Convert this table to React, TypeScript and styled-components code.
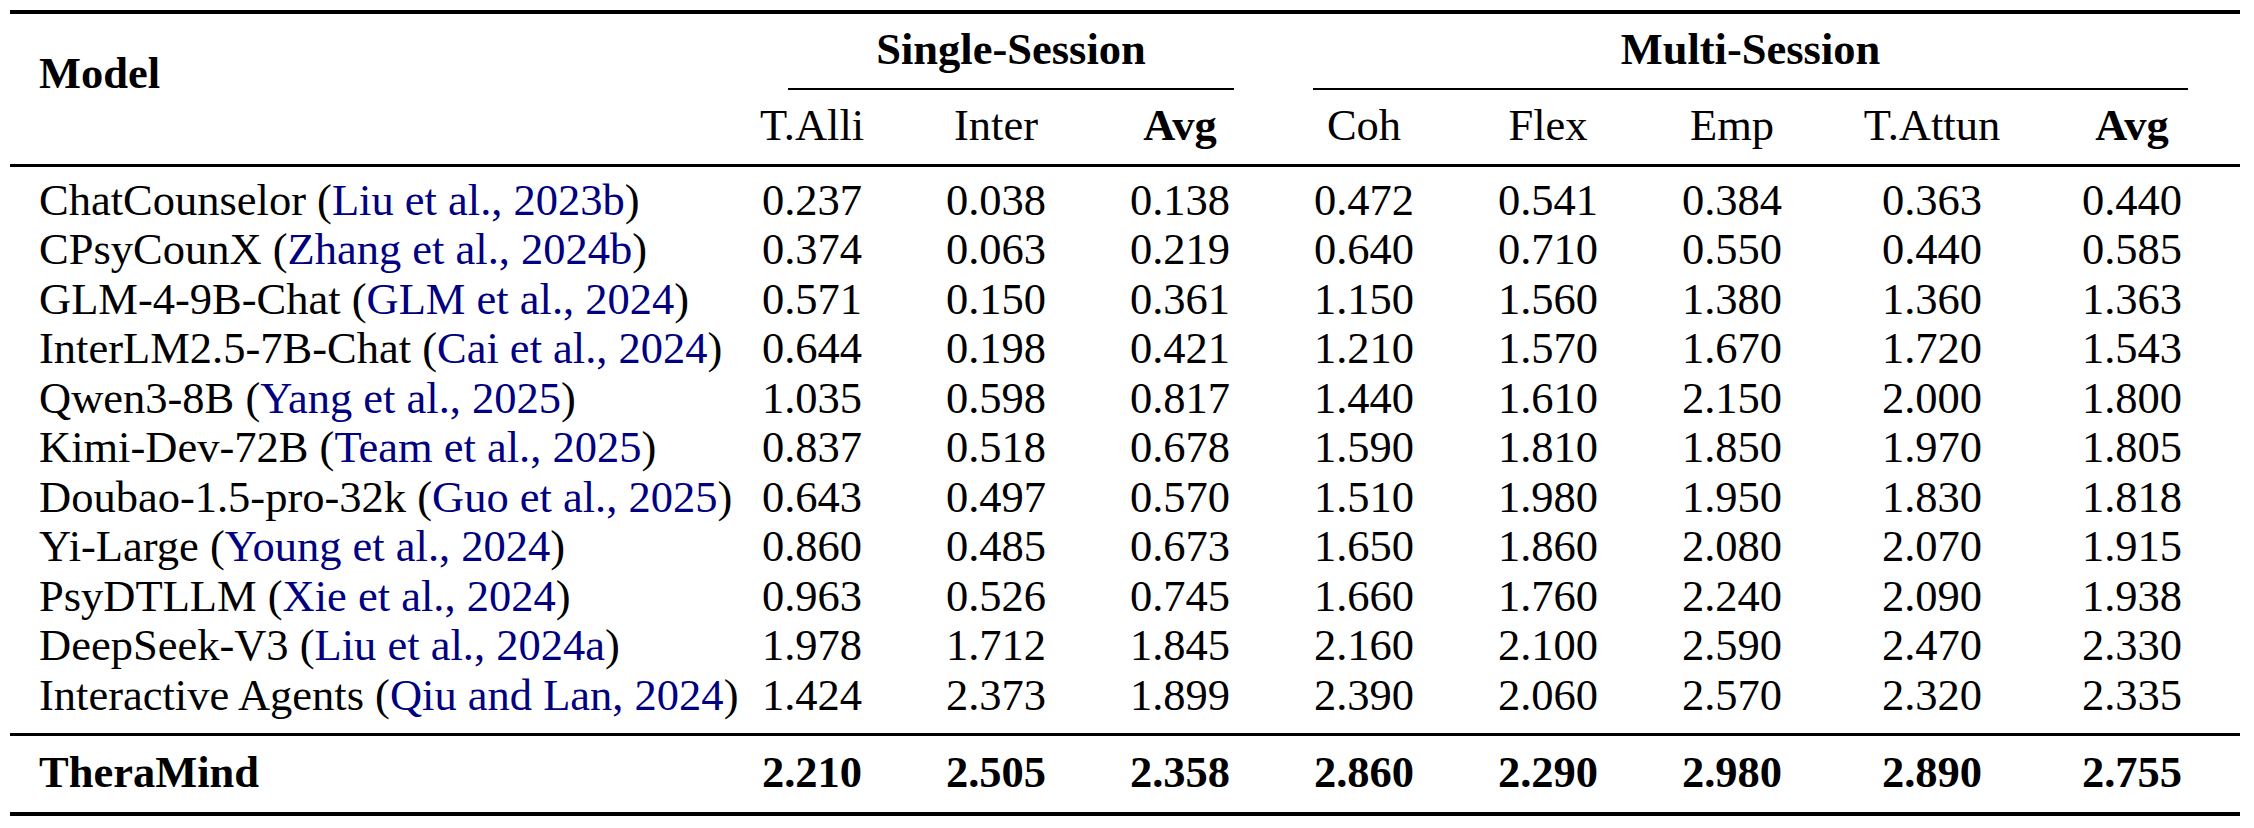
import React from "react";
import styled, { createGlobalStyle } from "styled-components";

const SERIF = `"Liberation Serif", "Times New Roman", Tinos, "DejaVu Serif", serif`;

const GlobalStyle = createGlobalStyle`
  html, body {
    margin: 0;
    padding: 0;
    background: #fff;
  }
  body {
    font-family: ${SERIF};
    color: #000;
  }
`;

// model | T.Alli Inter Avg | Coh Flex Emp T.Attun Avg
const COLUMNS = "710px repeat(6, 184px) 216px 184px";

const Page = styled.div`
  padding: 10px 0 0 10px;
`;

const Table = styled.div`
  width: 2230px;
  display: flex;
  flex-direction: column;
  font-family: ${SERIF};
  font-size: 44.5px;
  line-height: 49.5px;
`;

const Rule = styled.div<{ $weight: number }>`
  height: 0;
  border-top: ${({ $weight }) => $weight}px solid #000;
`;

const Header = styled.div`
  display: grid;
  grid-template-columns: ${COLUMNS};
  grid-template-rows: 49.5px 26.5px 49.5px;
  padding: 10.5px 0 14px;
`;

const ModelHead = styled.div`
  grid-column: 1;
  grid-row: 1 / 4;
  padding: 24px 0 0 29px;
  font-weight: 700;
`;

const Group = styled.div<{ $cols: string; $trimLeft: number; $trimRight: number }>`
  grid-column: ${({ $cols }) => $cols};
  grid-row: 1 / 3;
  margin: 0 ${({ $trimRight }) => $trimRight}px 0 ${({ $trimLeft }) => $trimLeft}px;
  display: flex;
  flex-direction: column;
`;

const GroupTitle = styled.div`
  text-align: center;
  font-weight: 700;
  white-space: nowrap;
`;

const GroupLine = styled.div`
  margin-top: 14px;
  border-top: 2px solid #000;
`;

const SubHead = styled.div<{ $bold?: boolean }>`
  grid-row: 3;
  text-align: center;
  white-space: nowrap;
  font-weight: ${({ $bold }) => ($bold ? 700 : 400)};
`;

const Body = styled.div<{ $padTop: number; $padBottom: number }>`
  display: flex;
  flex-direction: column;
  padding: ${({ $padTop }) => $padTop}px 0 ${({ $padBottom }) => $padBottom}px;
`;

const Row = styled.div<{ $bold?: boolean }>`
  display: grid;
  grid-template-columns: ${COLUMNS};
  height: 49.5px;
  font-weight: ${({ $bold }) => ($bold ? 700 : 400)};
`;

const ModelCell = styled.div`
  padding-left: 29px;
  white-space: nowrap;
`;

const Cite = styled.span`
  color: #000080;
`;

const Num = styled.div`
  text-align: center;
  white-space: nowrap;
`;

const SUB_HEADS = [
  { label: "T.Alli" },
  { label: "Inter" },
  { label: "Avg", bold: true },
  { label: "Coh" },
  { label: "Flex" },
  { label: "Emp" },
  { label: "T.Attun" },
  { label: "Avg", bold: true },
];

type ModelRow = { name: string; cite: string; scores: string[] };

const ROWS: ModelRow[] = [
  { name: "ChatCounselor", cite: "Liu et al., 2023b", scores: ["0.237", "0.038", "0.138", "0.472", "0.541", "0.384", "0.363", "0.440"] },
  { name: "CPsyCounX", cite: "Zhang et al., 2024b", scores: ["0.374", "0.063", "0.219", "0.640", "0.710", "0.550", "0.440", "0.585"] },
  { name: "GLM-4-9B-Chat", cite: "GLM et al., 2024", scores: ["0.571", "0.150", "0.361", "1.150", "1.560", "1.380", "1.360", "1.363"] },
  { name: "InterLM2.5-7B-Chat", cite: "Cai et al., 2024", scores: ["0.644", "0.198", "0.421", "1.210", "1.570", "1.670", "1.720", "1.543"] },
  { name: "Qwen3-8B", cite: "Yang et al., 2025", scores: ["1.035", "0.598", "0.817", "1.440", "1.610", "2.150", "2.000", "1.800"] },
  { name: "Kimi-Dev-72B", cite: "Team et al., 2025", scores: ["0.837", "0.518", "0.678", "1.590", "1.810", "1.850", "1.970", "1.805"] },
  { name: "Doubao-1.5-pro-32k", cite: "Guo et al., 2025", scores: ["0.643", "0.497", "0.570", "1.510", "1.980", "1.950", "1.830", "1.818"] },
  { name: "Yi-Large", cite: "Young et al., 2024", scores: ["0.860", "0.485", "0.673", "1.650", "1.860", "2.080", "2.070", "1.915"] },
  { name: "PsyDTLLM", cite: "Xie et al., 2024", scores: ["0.963", "0.526", "0.745", "1.660", "1.760", "2.240", "2.090", "1.938"] },
  { name: "DeepSeek-V3", cite: "Liu et al., 2024a", scores: ["1.978", "1.712", "1.845", "2.160", "2.100", "2.590", "2.470", "2.330"] },
  { name: "Interactive Agents", cite: "Qiu and Lan, 2024", scores: ["1.424", "2.373", "1.899", "2.390", "2.060", "2.570", "2.320", "2.335"] },
];

const OURS = {
  name: "TheraMind",
  scores: ["2.210", "2.505", "2.358", "2.860", "2.290", "2.980", "2.890", "2.755"],
};

export default function App() {
  return (
    <Page>
      <GlobalStyle />
      <Table>
        <Rule $weight={4} />
        <Header>
          <ModelHead>Model</ModelHead>
          <Group $cols="2 / 5" $trimLeft={68} $trimRight={38}>
            <GroupTitle>Single-Session</GroupTitle>
            <GroupLine />
          </Group>
          <Group $cols="5 / 10" $trimLeft={41} $trimRight={36}>
            <GroupTitle>Multi-Session</GroupTitle>
            <GroupLine />
          </Group>
          {SUB_HEADS.map((h, i) => (
            <SubHead key={i} $bold={h.bold}>
              {h.label}
            </SubHead>
          ))}
        </Header>
        <Rule $weight={3} />
        <Body $padTop={8.5} $padBottom={13}>
          {ROWS.map((r) => (
            <Row key={r.name}>
              <ModelCell>
                {r.name} (<Cite>{r.cite}</Cite>)
              </ModelCell>
              {r.scores.map((s, i) => (
                <Num key={i}>{s}</Num>
              ))}
            </Row>
          ))}
        </Body>
        <Rule $weight={3} />
        <Body $padTop={11.5} $padBottom={15}>
          <Row $bold>
            <ModelCell>{OURS.name}</ModelCell>
            {OURS.scores.map((s, i) => (
              <Num key={i}>{s}</Num>
            ))}
          </Row>
        </Body>
        <Rule $weight={4} />
      </Table>
    </Page>
  );
}
